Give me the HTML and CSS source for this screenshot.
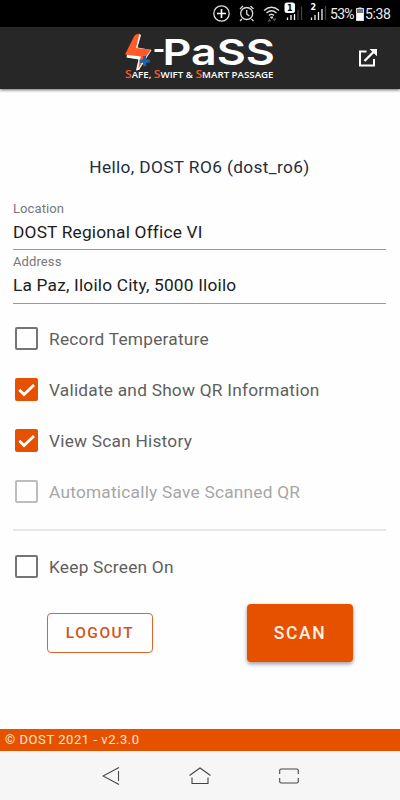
FILE: index.html
```html
<!DOCTYPE html>
<html lang="en">
<head>
<meta charset="utf-8">
<title>S-PaSS</title>
<link rel="stylesheet" href="styles.css">
</head>
<body>
<div class="status">
  <svg class="status-icons" width="116" height="27" viewBox="212 0 116 27" fill="none" stroke="#ddd" stroke-width="1.3">
    <circle cx="221.500" cy="13.500" r="7.700"/><path d="M221.500 9v9M217 13.500h9" stroke="#fff" stroke-width="1.600"/>
    <circle cx="246.700" cy="13.500" r="6"/><path d="M246.700 10v4l2.500 2M240 9l3-3M253.500 9l-3-3M242 19l-2 2M251.500 19l2 2"/>
    <path d="M264 10.500q7.500-6.500 15 0M266.500 13q5-4.500 10 0M269 15.500q2.500-2.500 5 0" stroke-width="1.400"/><path d="M270.500 17h2.500l-1.200 1.500z" fill="#fff" stroke-width="1"/>
    <path d="M267.500 21.500l2-3 2 3zM272.500 18.500h4l-2 3z" fill="#555" stroke="none"/>
    <rect x="284.500" y="2.500" width="10.500" height="10.500" rx="2.500" fill="#fff" stroke="none"/>
    <path d="M287.500 17.500v2.500M291 15v5M294.500 14v6" stroke="#fff"/><path d="M298 10v10M301.500 6.500v13.500" stroke="#444"/>
    <path d="M311.500 17.500v2.500M315 15v5M318.500 12v8M322 9v11" stroke="#eee"/><path d="M325.500 6v14" stroke="#444"/>
    <text x="287" y="11" class="sim sim-dark">1</text><text x="310.500" y="10" class="sim">2</text>
  </svg>
  <span class="battery-text">53%</span>
  <svg class="battery" width="8" height="14" viewBox="0 0 8 14"><path d="M2.500 0h3v1H8v13H0V1h2.500z" fill="#777"/><path d="M1 6h6v7H1z" fill="#fff"/><path d="M.5 1.500h7v12h-7z" fill="none" stroke="#ddd"/></svg>
  <span class="clock">5:38</span>
</div>
<header class="bar">
  <svg class="logo" width="156" height="54" viewBox="122 31 156 54">
    <path d="M139 34l2 1-3.500 12.500 14 2.500-12.500 20-3 .5 2.500-11-12-2 .5-3z" fill="#fff"/>
    <path d="M134 36.500q1-2.500 5.500-3L136 48l15 1.500L138 69l2.800-12.500-15.800-2z" fill="#ff5a27"/>
    <path d="M143 56h3.200v3.400h3.600v3.400h-3.600v3.400H143v-3.400h-3.400v-3.400h3.400z" fill="#1766ad"/>
    <path d="M154.500 49h9v3h-9z" fill="#fff"/>
    <text x="162.500" y="64.700" class="brand" textLength="112.500" lengthAdjust="spacingAndGlyphs">PaSS</text>
    <text x="125" y="78.300" class="tagline" textLength="148.500" lengthAdjust="spacingAndGlyphs"><tspan class="initial">S</tspan>AFE, <tspan class="initial">S</tspan>WIFT &amp; <tspan class="initial">S</tspan>MART PASSAGE</text>
  </svg>
  <svg class="open" width="20" height="20" viewBox="0 0 20 20" fill="none" stroke="#fff" stroke-width="2"><path d="M8.500 3.500H2v14h14V11"/><path d="M6.500 13L17 2.500" stroke-width="2.300"/><path d="M11.500 1H19v7.200z" fill="#fff" stroke="none"/></svg>
</header>
<main class="content">
  <p class="hello">Hello, DOST RO6 (dost_ro6)</p>
  <div class="field field-location"><span class="label">Location</span><span class="value">DOST Regional Office VI</span></div>
  <div class="field"><span class="label">Address</span><span class="value">La Paz, Iloilo City, 5000 Iloilo</span></div>
  <div class="options">
    <div class="option"><span class="box"></span><span>Record Temperature</span></div>
    <div class="option"><span class="box checked"><svg width="23" height="23" viewBox="0 0 23 23"><path d="M4.300 11.800l4.700 4.700L19 6.900" fill="none" stroke="#fff" stroke-width="2.800"/></svg></span><span>Validate and Show QR Information</span></div>
    <div class="option"><span class="box checked"><svg width="23" height="23" viewBox="0 0 23 23"><path d="M4.300 11.800l4.700 4.700L19 6.900" fill="none" stroke="#fff" stroke-width="2.800"/></svg></span><span>View Scan History</span></div>
    <div class="option disabled"><span class="box"></span><span>Automatically Save Scanned QR</span></div>
  </div>
  <div class="divider"></div>
  <div class="option keep"><span class="box"></span><span>Keep Screen On</span></div>
  <div class="actions"><button class="logout">LOGOUT</button><button class="scan">SCAN</button></div>
</main>
<footer class="footer">© DOST 2021 - v2.3.0</footer>
<nav class="nav">
  <svg width="18" height="20" viewBox="0 0 18 20"><path d="M17 1.500L1 10l16 8.500M16.500 5v10"/></svg>
  <svg width="22" height="20" viewBox="0 0 22 20"><path d="M.5 9.500L11 2l10.500 7.500M3 11.500V17.500h16v-6"/></svg>
  <svg width="20" height="20" viewBox="0 0 20 20"><path d="M.7 8V4.500q0-1.500 1.500-1.500h15.600q1.500 0 1.500 1.500V8M.7 12v3.500q0 1.500 1.500 1.500h15.600q1.500 0 1.500-1.500V12"/></svg>
</nav>
</body>
</html>
```
FILE: styles.css
```css
* { box-sizing: border-box; }
body {
  margin: 0;
  width: 400px;
  height: 800px;
  display: flex;
  flex-direction: column;
  background: #fefefe;
  font-family: Roboto, sans-serif;
  overflow: hidden;
}
.status {
  height: 27px;
  flex: none;
  display: flex;
  align-items: center;
  background: #000;
  color: #eee;
  font-size: 14px;
  padding-left: 212px;
}
.status-icons { flex: none; }
.sim { font: bold 8px "DejaVu Sans", sans-serif; fill: #fff; stroke: none; }
.sim-dark { fill: #000; }
.battery-text { width: 26px; margin-left: 2px; letter-spacing: -0.7px; }
.battery { flex: none; margin-right: 1px; }
.clock { font-size: 14px; letter-spacing: -0.4px; }
.bar {
  height: 62px;
  flex: none;
  display: flex;
  justify-content: space-between;
  align-items: center;
  padding: 0 22px 0 122px;
  background: #272727;
  box-shadow: 0 1px 3px rgba(0, 0, 0, 0.6);
}
.logo { flex: none; }
.brand { font: 600 36px Inter, sans-serif; fill: #fff; }
.tagline { font: 600 8.8px "Open Sans", sans-serif; fill: #fff; }
.initial { font-size: 11px; fill: #ff5a27; }
.content { flex: 1; padding: 66px 14px 0 13px; }
.hello {
  margin: 0;
  height: 24px;
  line-height: 24px;
  text-align: center;
  font-size: 17.3px;
  letter-spacing: 0.37px;
  color: #242d3d;
}
.field {
  height: 54px;
  display: flex;
  flex-direction: column;
  border-bottom: 1px solid #999;
}
.field-location { margin-top: 18px; height: 53px; }
.label { height: 21px; line-height: 24px; font-size: 13px; letter-spacing: 0.1px; color: #777; }
.value { line-height: 28px; font-size: 17.3px; letter-spacing: 0.2px; color: #202020; }
.options { padding-top: 23px; display: grid; gap: 28px; }
.option {
  height: 23px;
  margin-left: 2px;
  display: flex;
  align-items: center;
  gap: 11px;
  line-height: 22px;
  font-size: 17.3px;
  letter-spacing: 0.23px;
  color: #5f5f5f;
}
.box { width: 23px; height: 23px; border: 2px solid #757575; border-radius: 2px; flex: none; }
.box svg { display: block; }
.checked { border: 0; background: #e65100; }
.disabled { color: #a6a6a6; }
.disabled .box { border-color: #bdbdbd; }
.divider { height: 2px; margin-top: 26px; background: #e8e8e8; }
.keep { margin-top: 24px; }
.actions {
  display: flex;
  justify-content: space-between;
  align-items: center;
  margin-top: 26px;
  padding: 0 33px 0 34px;
}
button { font-family: Roboto, sans-serif; font-weight: 500; padding: 0; }
.logout {
  width: 106px;
  height: 40px;
  border: 1px solid #e0642a;
  border-radius: 4px;
  background: transparent;
  color: #d65314;
  font-size: 15.5px;
  letter-spacing: 1.5px;
}
.scan {
  width: 106px;
  height: 58px;
  border: 0;
  border-radius: 4px;
  background: #e65100;
  color: #fff1e5;
  font-size: 17.5px;
  letter-spacing: 1.6px;
  box-shadow: 0 2px 4px rgba(0, 0, 0, 0.4);
}
.footer {
  height: 22px;
  flex: none;
  padding-left: 5px;
  line-height: 22px;
  font-size: 13px;
  letter-spacing: 0.55px;
  color: #ffe5d3;
  background: #e65100;
}
.nav {
  height: 49px;
  flex: none;
  display: flex;
  justify-content: space-between;
  align-items: center;
  padding: 0 101px 0 102px;
  background: #f6f6f6;
}
.nav svg { fill: none; stroke: #444; stroke-width: 1.1; }
```
